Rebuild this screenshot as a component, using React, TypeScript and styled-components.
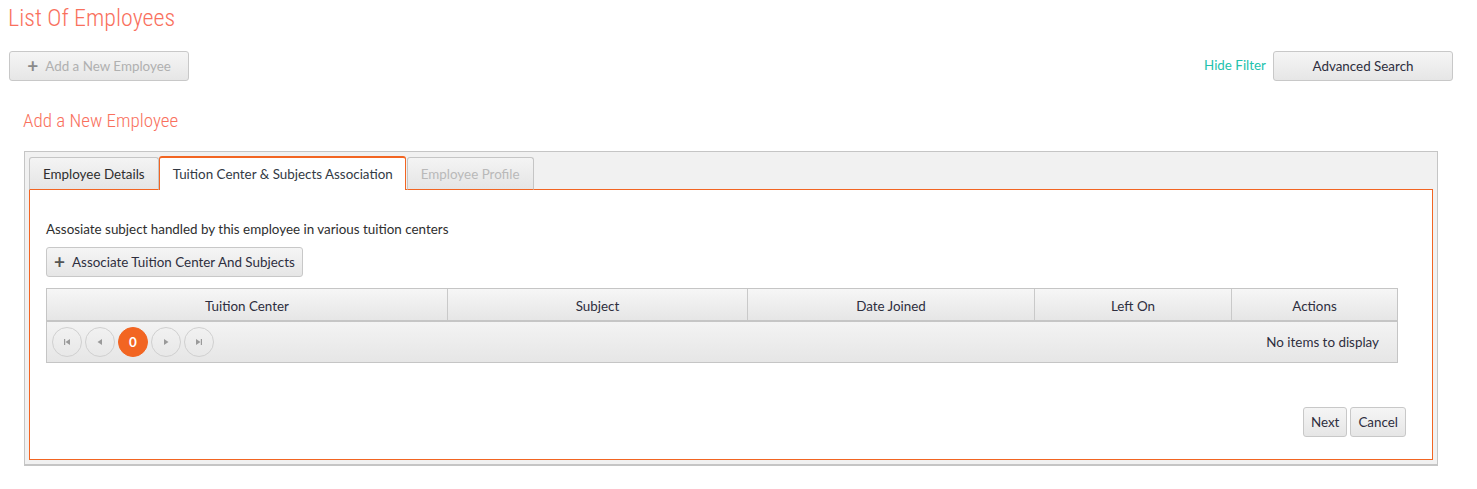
import React from "react";
import styled, { createGlobalStyle } from "styled-components";

const Global = createGlobalStyle`
  html, body { margin: 0; padding: 0; background: #fff; }
  body { font-family: Lato, "Noto Sans", sans-serif; font-size: 13.4px; color: #2e2e2e; }
  * { box-sizing: border-box; }
`;

const Page = styled.div`
  padding: 0 24px 0 9px;
  width: 1477px;
`;

const Title = styled.h1`
  margin: 0;
  padding-top: 4px;
  height: 37px;
  font-family: "Liberation Sans Narrow", "Roboto Condensed", Roboto, sans-serif;
  font-weight: 300;
  font-size: 24px;
  color: #f9705d;
  line-height: 28px;
  margin-left: -1px;
`;

const Toolbar = styled.div`
  display: flex;
  align-items: center;
  justify-content: space-between;
  margin-top: 14px;
  width: 1444px;
`;

const Right = styled.div`
  display: flex;
  align-items: center;
  gap: 7px;
`;

const Btn = styled.button<{ $w?: number; $disabled?: boolean }>`
  display: inline-flex;
  align-items: center;
  justify-content: center;
  gap: 7px;
  height: 30px;
  ${(p) => (p.$w ? `width: ${p.$w}px;` : "padding: 0 7px;")}
  border: 1px solid #c8c8c8;
  border-radius: 3px;
  background: linear-gradient(#f5f5f5, #e6e6e6);
  font-family: Lato, "Noto Sans", sans-serif;
  font-size: 13.4px;
  color: ${(p) => (p.$disabled ? "#b0b0b0" : "#2e2e3e")};
  cursor: pointer;
`;

const Plus = styled.span<{ $c?: string }>`
  font-size: 19px;
  font-weight: 700;
  line-height: 1;
  color: ${(p) => p.$c || "#555"};
  margin-top: -2px;
`;

const Link = styled.a`
  color: #23c2ad;
  font-size: 13.4px;
  text-decoration: none;
  margin-top: -3px;
`;

const SubTitle = styled.h2`
  margin: 28px 0 0 14px;
  font-family: "Liberation Sans Narrow", "Roboto Condensed", Roboto, sans-serif;
  font-weight: 300;
  font-size: 19px;
  line-height: 24px;
  color: #f9705d;
`;

const Panel = styled.div`
  margin: 18px 0 0 15px;
  width: 1414px;
  border: 1px solid #c5c5c5;
  border-bottom-width: 2px;
  background: #f1f1f1;
  padding: 4px 4px 4px 4px;
`;

const Tabs = styled.div`
  display: flex;
  align-items: flex-end;
  margin-bottom: -1px;
  position: relative;
  z-index: 1;
`;

const Tab = styled.div<{ $active?: boolean; $disabled?: boolean }>`
  height: ${(p) => (p.$active ? "34px" : "33px")};
  padding: 0 13px;
  display: flex;
  align-items: center;
  border: 1px solid #c5c5c5;
  border-bottom: ${(p) => (p.$active ? "none" : "1px solid #f26522")};
  border-top: ${(p) => (p.$active ? "2px solid #f26522" : "1px solid #c5c5c5")};
  border-radius: 3px 3px 0 0;
  background: ${(p) => (p.$active ? "#fff" : "linear-gradient(#f4f4f4, #e5e5e5)")};
  color: ${(p) => (p.$disabled ? "#b9b9b9" : p.$active ? "#333a45" : "#2e2e2e")};
  font-size: 13.4px;
  ${(p) => (p.$active ? "border-left:1px solid #f26522;border-right:1px solid #f26522;padding:0 12px 0 13px;" : "")}
  margin-right: ${(p) => (p.$active ? "1px" : "0")};
`;

const Content = styled.div`
  border: 1px solid #f26522;
  background: #fff;
  height: 271px;
  padding: 31px 16px 0 16px;
  display: flex;
  flex-direction: column;
`;

const Desc = styled.div`
  font-size: 13.4px;
  color: #2e2e2e;
  margin-bottom: 10px;
`;

const Grid = styled.div`
  margin-top: 11px;
  width: 1352px;
  border: 1px solid #c5c5c5;
`;

const HeadRow = styled.div`
  display: grid;
  grid-template-columns: 401px 300px 287px 197px 1fr;
  height: 33px;
  background: linear-gradient(#f6f6f6, #e6e6e6);
  border-bottom: 2px solid #c5c5c5;
`;

const HeadCell = styled.div<{ $last?: boolean }>`
  display: flex;
  align-items: center;
  justify-content: center;
  padding-top: 2px;
  font-size: 13.4px;
  color: #2e2e3e;
  border-right: ${(p) => (p.$last ? "none" : "1px solid #c9c9c9")};
`;

const Pager = styled.div`
  display: flex;
  align-items: center;
  height: 40px;
  padding: 0 18px 0 5px;
  background: linear-gradient(#f3f3f3, #e6e6e6);
`;

const PageBtn = styled.div<{ $active?: boolean }>`
  width: 30px;
  height: 30px;
  border-radius: 50%;
  display: flex;
  align-items: center;
  justify-content: center;
  margin-right: 3px;
  border: 1px solid ${(p) => (p.$active ? "#f26522" : "#d0d0d0")};
  background: ${(p) => (p.$active ? "#f26522" : "transparent")};
  color: #fff;
  font-size: 13.4px;
  font-weight: 700;
`;

const Info = styled.div`
  margin-left: auto;
  font-size: 13.4px;
  color: #2e2e3e;
`;

const Footer = styled.div`
  display: flex;
  justify-content: flex-end;
  gap: 3px;
  margin-top: 44px;
  padding-right: 10px;
`;

const Icon = ({ kind }: { kind: "first" | "prev" | "next" | "last" }) => {
  const c = "#9a9a9a";
  return (
    <svg width="10" height="10" viewBox="0 0 10 10">
      {kind === "first" && (
        <>
          <rect x="2" y="2" width="1.2" height="6" fill={c} />
          <polygon points="8,2 8,8 3.5,5" fill={c} />
        </>
      )}
      {kind === "prev" && <polygon points="7,2 7,8 2.5,5" fill={c} />}
      {kind === "next" && <polygon points="3,2 3,8 7.5,5" fill={c} />}
      {kind === "last" && (
        <>
          <polygon points="2,2 2,8 6.5,5" fill={c} />
          <rect x="6.8" y="2" width="1.2" height="6" fill={c} />
        </>
      )}
    </svg>
  );
};

export default function App() {
  return (
    <>
      <Global />
      <Page>
        <Title>List Of Employees</Title>
        <Toolbar>
          <Btn $w={180} $disabled>
            <Plus $c="#8a8a8a">+</Plus>Add a New Employee
          </Btn>
          <Right>
            <Link href="#">Hide Filter</Link>
            <Btn $w={180}>Advanced Search</Btn>
          </Right>
        </Toolbar>
        <SubTitle>Add a New Employee</SubTitle>
        <Panel>
          <Tabs>
            <Tab>Employee Details</Tab>
            <Tab $active>Tuition Center &amp; Subjects Association</Tab>
            <Tab $disabled>Employee Profile</Tab>
          </Tabs>
          <Content>
            <Desc>Assosiate subject handled by this employee in various tuition centers</Desc>
            <div>
              <Btn>
                <Plus>+</Plus>Associate Tuition Center And Subjects
              </Btn>
            </div>
            <Grid>
              <HeadRow>
                <HeadCell>Tuition Center</HeadCell>
                <HeadCell>Subject</HeadCell>
                <HeadCell>Date Joined</HeadCell>
                <HeadCell>Left On</HeadCell>
                <HeadCell $last>Actions</HeadCell>
              </HeadRow>
              <Pager>
                <PageBtn><Icon kind="first" /></PageBtn>
                <PageBtn><Icon kind="prev" /></PageBtn>
                <PageBtn $active>0</PageBtn>
                <PageBtn><Icon kind="next" /></PageBtn>
                <PageBtn><Icon kind="last" /></PageBtn>
                <Info>No items to display</Info>
              </Pager>
            </Grid>
            <Footer>
              <Btn>Next</Btn>
              <Btn>Cancel</Btn>
            </Footer>
          </Content>
        </Panel>
      </Page>
    </>
  );
}
